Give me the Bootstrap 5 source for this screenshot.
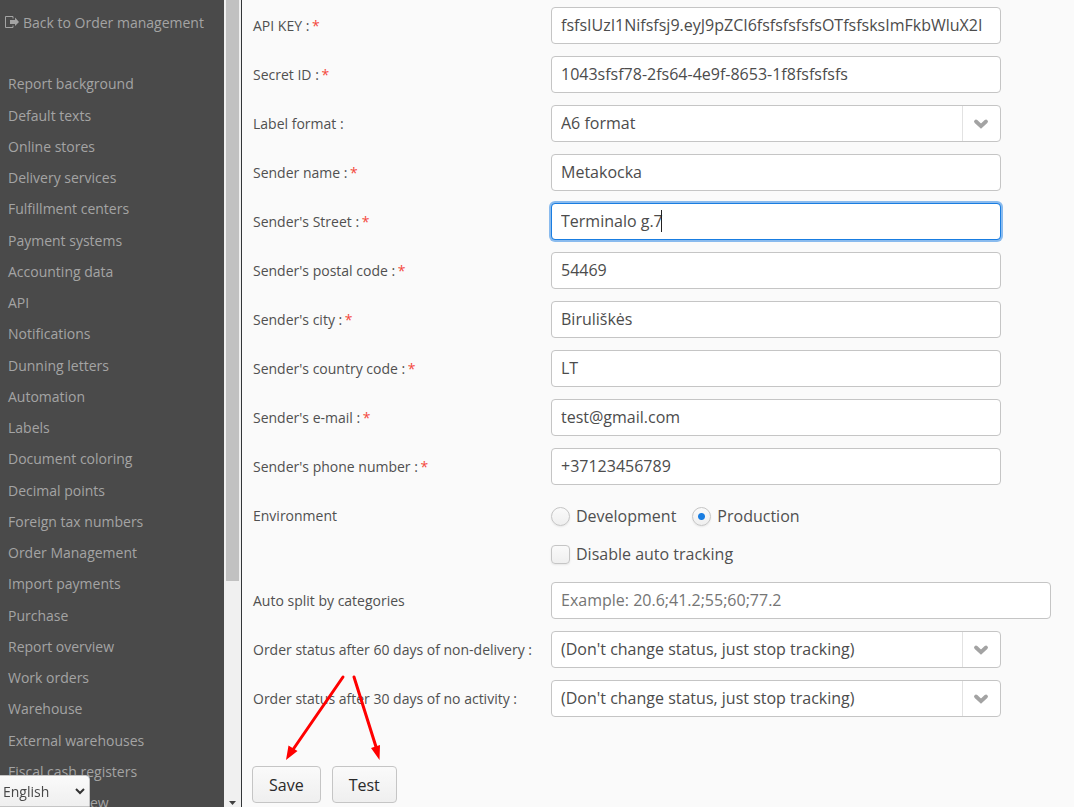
<!DOCTYPE html>
<html lang="en">
<head>
<meta charset="utf-8">
<meta name="viewport" content="width=device-width, initial-scale=1">
<title>Delivery service settings</title>
<link href="https://cdn.jsdelivr.net/npm/bootstrap@5.3.0/dist/css/bootstrap.min.css" rel="stylesheet">
<style>
  body { font-family: "Open Sans", "Noto Sans", sans-serif; font-size: 14px; line-height: 20px; color: #505050; background: #fafafa; }
  .side { width: 224px; background: #4a4a4a; }
  .side a { color: #a4a4a4; text-decoration: none; white-space: nowrap; }
  .back-link { padding: 13px 0 0 5px; height: 68px; gap: 4px; }
  .menu li { height: 31px; padding-left: 8px; display: flex; align-items: center; }
  .menu li:nth-child(4n+1) { height: 32px; }
  .track { width: 18px; background: #f0f0f0; border-right: 1px solid #333638; padding: 0 2px; }
  .thumb { height: 72%; background: #c1c1c1; }
  .lang { position: fixed; left: -1px; bottom: 0; width: 91px; height: 32px; border: 1px solid #c5c5c5; border-radius: 0 4px 0 0; padding: 1px 20px 0 3px; color: #474747; appearance: none;
    background: url("data:image/svg+xml,%3Csvg xmlns='http://www.w3.org/2000/svg' viewBox='0 0 10 8'%3E%3Cpath d='M1 2l4 4 4-4' fill='none' stroke='%23333' stroke-width='2'/%3E%3C/svg%3E") no-repeat right 4px center / 10px 8px, linear-gradient(#fafafa, #efefef); }
  .settings { padding: 7px 10px 4px 10px; }
  .line { display: flex; margin-bottom: 12px; }
  .line-label { width: 299px; flex: none; padding: 9px 0 8px 1px; white-space: nowrap; }
  .req { color: #f4483c; margin-left: -1px; }
  .field { flex: 1 1 0; max-width: 450px; min-width: 0; position: relative; }
  .field.wide { max-width: 500px; }
  .field .form-control, .field .form-select { height: 37px; padding: 0 9px 1px; font-size: 16px; line-height: 24px; color: #4c4c4c; border: 1px solid #c5c5c5; border-radius: 4px; background-color: #fff; }
  .field .form-control::placeholder { color: #757575; opacity: 1; }
  .field .form-select { padding-right: 48px; background-repeat: no-repeat; background-position: right 0 center; background-size: 38px 35px;
    background-image: url("data:image/svg+xml,%3Csvg xmlns='http://www.w3.org/2000/svg' viewBox='0 0 38 35'%3E%3Cpath d='M.5 0v35' stroke='%23e2e2e2'/%3E%3Cpath d='M14 15.500l5 4.700 5-4.700' fill='none' stroke='%23a3a3a3' stroke-width='3.8' stroke-linecap='round'/%3E%3C/svg%3E"); }
  .field .form-control.active-input { border-color: #197de1; box-shadow: 0 0 0 2px #8abbee; caret-color: transparent; }
  .caret-bar { position: absolute; left: 110px; top: 7px; width: 1px; height: 22px; background: #222; }
  .choice { height: 38px; font-size: 16px; line-height: 24px; }
  .choice label { display: flex; align-items: center; gap: 6px; }
  .choice input { appearance: none; width: 19px; height: 19px; margin: 0; border: 1px solid #c5c5c5; border-radius: 4px; background: linear-gradient(#fafafa, #efefef); box-shadow: 0 1px 2px rgba(0,0,0,.08); }
  .choice input[type=radio] { border-radius: 50%; }
  .choice input:checked { background: radial-gradient(circle, #197de1 3px, transparent 4px), linear-gradient(#fafafa, #efefef); }
  .env { margin-bottom: 9px; }
  .actions { position: relative; margin-top: 49px; gap: 11px; }
  .actions .btn { height: 37px; padding: 0 16px; font-size: 16px; line-height: 24px; color: #2a2a2a; border: 1px solid #c5c5c5; border-radius: 4px; background: linear-gradient(#fafafa, #efefef); }
  .arrows { position: absolute; left: 28px; bottom: 37px; width: 110px; height: 96px; pointer-events: none; }
</style>
</head>
<body>
<div class="d-flex vh-100 overflow-hidden">
  <nav class="side flex-shrink-0 overflow-hidden" aria-label="Settings">
    <a class="back-link d-flex align-items-start" href="#">
      <svg width="14" height="16" viewBox="0 -3 14 16" aria-hidden="true"><path d="M8 2.5V.5H.5v11H8v-2" fill="none" stroke="#a4a4a4"/><path d="M5 4h5V1.5L14 6l-4 4V8H5z" fill="#a4a4a4"/></svg>
      Back to Order management
    </a>
    <ul class="menu list-unstyled mb-0">
      <li><a href="#">Report background</a></li>
      <li><a href="#">Default texts</a></li>
      <li><a href="#">Online stores</a></li>
      <li><a href="#">Delivery services</a></li>
      <li><a href="#">Fulfillment centers</a></li>
      <li><a href="#">Payment systems</a></li>
      <li><a href="#">Accounting data</a></li>
      <li><a href="#">API</a></li>
      <li><a href="#">Notifications</a></li>
      <li><a href="#">Dunning letters</a></li>
      <li><a href="#">Automation</a></li>
      <li><a href="#">Labels</a></li>
      <li><a href="#">Document coloring</a></li>
      <li><a href="#">Decimal points</a></li>
      <li><a href="#">Foreign tax numbers</a></li>
      <li><a href="#">Order Management</a></li>
      <li><a href="#">Import payments</a></li>
      <li><a href="#">Purchase</a></li>
      <li><a href="#">Report overview</a></li>
      <li><a href="#">Work orders</a></li>
      <li><a href="#">Warehouse</a></li>
      <li><a href="#">External warehouses</a></li>
      <li><a href="#">Fiscal cash registers</a></li>
      <li><a href="#">Order overview</a></li>
    </ul>
  </nav>
  <div class="track flex-shrink-0 d-flex flex-column justify-content-between" aria-hidden="true">
    <div class="thumb"></div>
    <svg class="align-self-center" width="7" height="6" viewBox="0 0 7 6"><path d="M0 0h7L3.5 4z" fill="#404040"/></svg>
  </div>

  <main class="flex-grow-1 overflow-hidden">
    <form class="settings">
      <div class="line"><label class="line-label" for="key">API KEY : <span class="req">*</span></label><div class="field"><input class="form-control" id="key" value="fsfsIUzI1Nifsfsj9.eyJ9pZCI6fsfsfsfsfsOTfsfsksImFkbWluX2I"></div></div>
      <div class="line"><label class="line-label" for="secret">Secret ID : <span class="req">*</span></label><div class="field"><input class="form-control" id="secret" value="1043sfsf78-2fs64-4e9f-8653-1f8fsfsfsfs"></div></div>
      <div class="line"><label class="line-label" for="format">Label format :</label><div class="field"><select class="form-select" id="format"><option>A6 format</option></select></div></div>
      <div class="line"><label class="line-label" for="name">Sender name : <span class="req">*</span></label><div class="field"><input class="form-control" id="name" value="Metakocka"></div></div>
      <div class="line"><label class="line-label" for="street">Sender's Street : <span class="req">*</span></label><div class="field"><input class="form-control active-input" id="street" value="Terminalo g.7"><span class="caret-bar"></span></div></div>
      <div class="line"><label class="line-label" for="postal">Sender's postal code : <span class="req">*</span></label><div class="field"><input class="form-control" id="postal" value="54469"></div></div>
      <div class="line"><label class="line-label" for="city">Sender's city : <span class="req">*</span></label><div class="field"><input class="form-control" id="city" value="Biruliškės"></div></div>
      <div class="line"><label class="line-label" for="country">Sender's country code : <span class="req">*</span></label><div class="field"><input class="form-control" id="country" value="LT"></div></div>
      <div class="line"><label class="line-label" for="mail">Sender's e-mail : <span class="req">*</span></label><div class="field"><input type="email" class="form-control" id="mail" value="test@gmail.com"></div></div>
      <div class="line"><label class="line-label" for="phone">Sender's phone number : <span class="req">*</span></label><div class="field"><input type="tel" class="form-control" id="phone" value="+37123456789"></div></div>
      <div class="line env" role="group" aria-labelledby="env-label">
        <div class="line-label" id="env-label">Environment</div>
        <div class="field">
          <div class="choice d-flex gap-3">
            <label><input type="radio" name="env">Development</label>
            <label><input type="radio" name="env" checked>Production</label>
          </div>
          <div class="choice d-flex"><label><input type="checkbox">Disable auto tracking</label></div>
        </div>
      </div>
      <div class="line"><label class="line-label" for="split">Auto split by categories</label><div class="field wide"><input class="form-control" id="split" placeholder="Example: 20.6;41.2;55;60;77.2"></div></div>
      <div class="line"><label class="line-label" for="after60">Order status after 60 days of non-delivery :</label><div class="field"><select class="form-select" id="after60"><option>(Don't change status, just stop tracking)</option></select></div></div>
      <div class="line mb-0"><label class="line-label" for="after30">Order status after 30 days of no activity :</label><div class="field"><select class="form-select" id="after30"><option>(Don't change status, just stop tracking)</option></select></div></div>
      <div class="actions d-flex">
        <button type="button" class="btn">Save</button>
        <button type="button" class="btn">Test</button>
        <svg class="arrows" viewBox="280 670 110 96" fill="#f00" stroke="#f00" aria-hidden="true">
          <path d="M343 677L292 751M354 677L377 750" stroke-width="3" stroke-linecap="round"/>
          <path d="M286 760l2.5-14.500 9 5.500zM379.500 760L371 748l9-3z" stroke="none"/>
        </svg>
      </div>
    </form>
  </main>
</div>
<select class="lang" aria-label="Language"><option>English</option></select>
<script src="https://cdn.jsdelivr.net/npm/bootstrap@5.3.0/dist/js/bootstrap.bundle.min.js"></script>
</body>
</html>
